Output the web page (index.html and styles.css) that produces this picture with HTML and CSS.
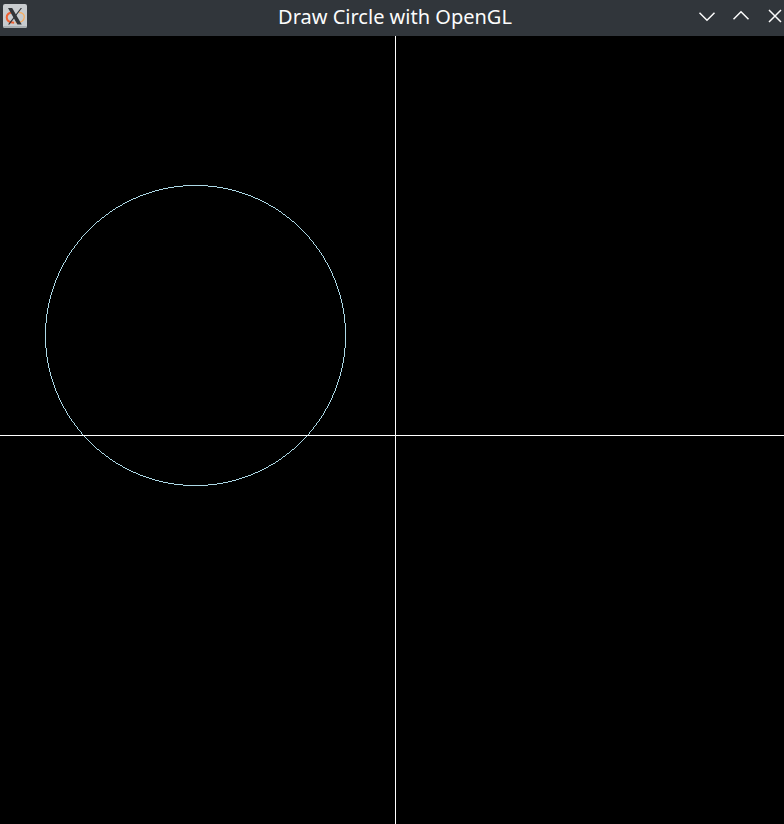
FILE: index.html
```html
<!DOCTYPE html>
<html lang="en">
<head>
<meta charset="utf-8">
<title>Draw Circle with OpenGL</title>
<link rel="stylesheet" href="styles.css">
</head>
<body>
<div class="window">
  <header class="titlebar">
    <svg class="app-icon" width="24" height="24" viewBox="0 0 24 24">
      <rect width="24" height="24" rx="2" fill="#c8cccf"/>
      <path d="M0 22h24a2 2 0 0 1-2 2H2a2 2 0 0 1-2-2z" fill="#a9aeb1"/>
      <path d="M8.500 8.500C5 9.200 3.700 11.500 3.700 13.500c0 3.300 3.500 5 7.500 5.200" fill="none" stroke="#ee6032" stroke-width="2"/>
      <path d="M12.500 18.700c5 0 8.600-2 8.800-5.500.1-2.600-2-4.500-5.300-4.800" fill="none" stroke="#f8ae62" stroke-width="1.300"/>
      <path d="M17.700 4h1.300L6.500 20.500H5z" fill="#303438"/>
      <path d="M5 4h4.200l9.500 16.500h-4.300z" fill="#303438"/>
    </svg>
    <h1 class="title">Draw Circle with OpenGL</h1>
    <div class="controls">
      <svg width="18" height="18" viewBox="0 0 18 18"><path d="M1.500 4.800 9 12.300 16.500 4.800"/></svg>
      <svg width="18" height="18" viewBox="0 0 18 18"><path d="M1.500 11.300 9 3.800l7.500 7.500"/></svg>
      <svg width="18" height="18" viewBox="0 0 18 18"><path d="M3 2l12 12M15 2 3 14"/></svg>
    </div>
  </header>
  <canvas class="canvas" width="784" height="788"></canvas>
</div>
<script src="circle.js"></script>
</body>
</html>
```
FILE: styles.css
```css
body {
  margin: 0;
  background: #000;
}

.window {
  width: 784px;
  height: 824px;
  display: flex;
  flex-direction: column;
  overflow: hidden;
}

.titlebar {
  display: grid;
  grid-template-columns: 100px 1fr 100px;
  align-items: center;
  height: 36px;
  flex: none;
  background: #31363b;
  color: #fcfcfc;
}

.app-icon {
  margin: 0 0 4px 3px;
}

.title {
  margin: 0 0 2px 6px;
  font: 400 20px/28px "Noto Sans", sans-serif;
  text-align: center;
  white-space: nowrap;
}

.controls {
  display: flex;
  gap: 16px;
  margin: 0 0 2px 14px;
}

.controls svg {
  flex: none;
  fill: none;
  stroke: #fcfcfc;
  stroke-width: 1.5;
}

.canvas {
  display: block;
  flex: none;
}
```
FILE: circle.js
```js
const ctx = document.querySelector('.canvas').getContext('2d');

// One octant of the circle, mirrored into the other seven.
function drawCircle(cx, cy, r) {
  ctx.fillStyle = '#add8e6';
  for (let x = 0, y = r; x <= y; x++) {
    y = Math.round(Math.sqrt(r * r - x * x));
    for (const [dx, dy] of [[x, y], [y, x]]) {
      for (const sx of [-1, 1]) {
        for (const sy of [-1, 1]) {
          ctx.fillRect(cx + sx * dx, cy + sy * dy, 1, 1);
        }
      }
    }
  }
}

drawCircle(195, 299, 150);

// Axes
ctx.fillStyle = '#fff';
ctx.fillRect(395, 0, 1, 788);
ctx.fillRect(0, 399, 784, 1);
```
